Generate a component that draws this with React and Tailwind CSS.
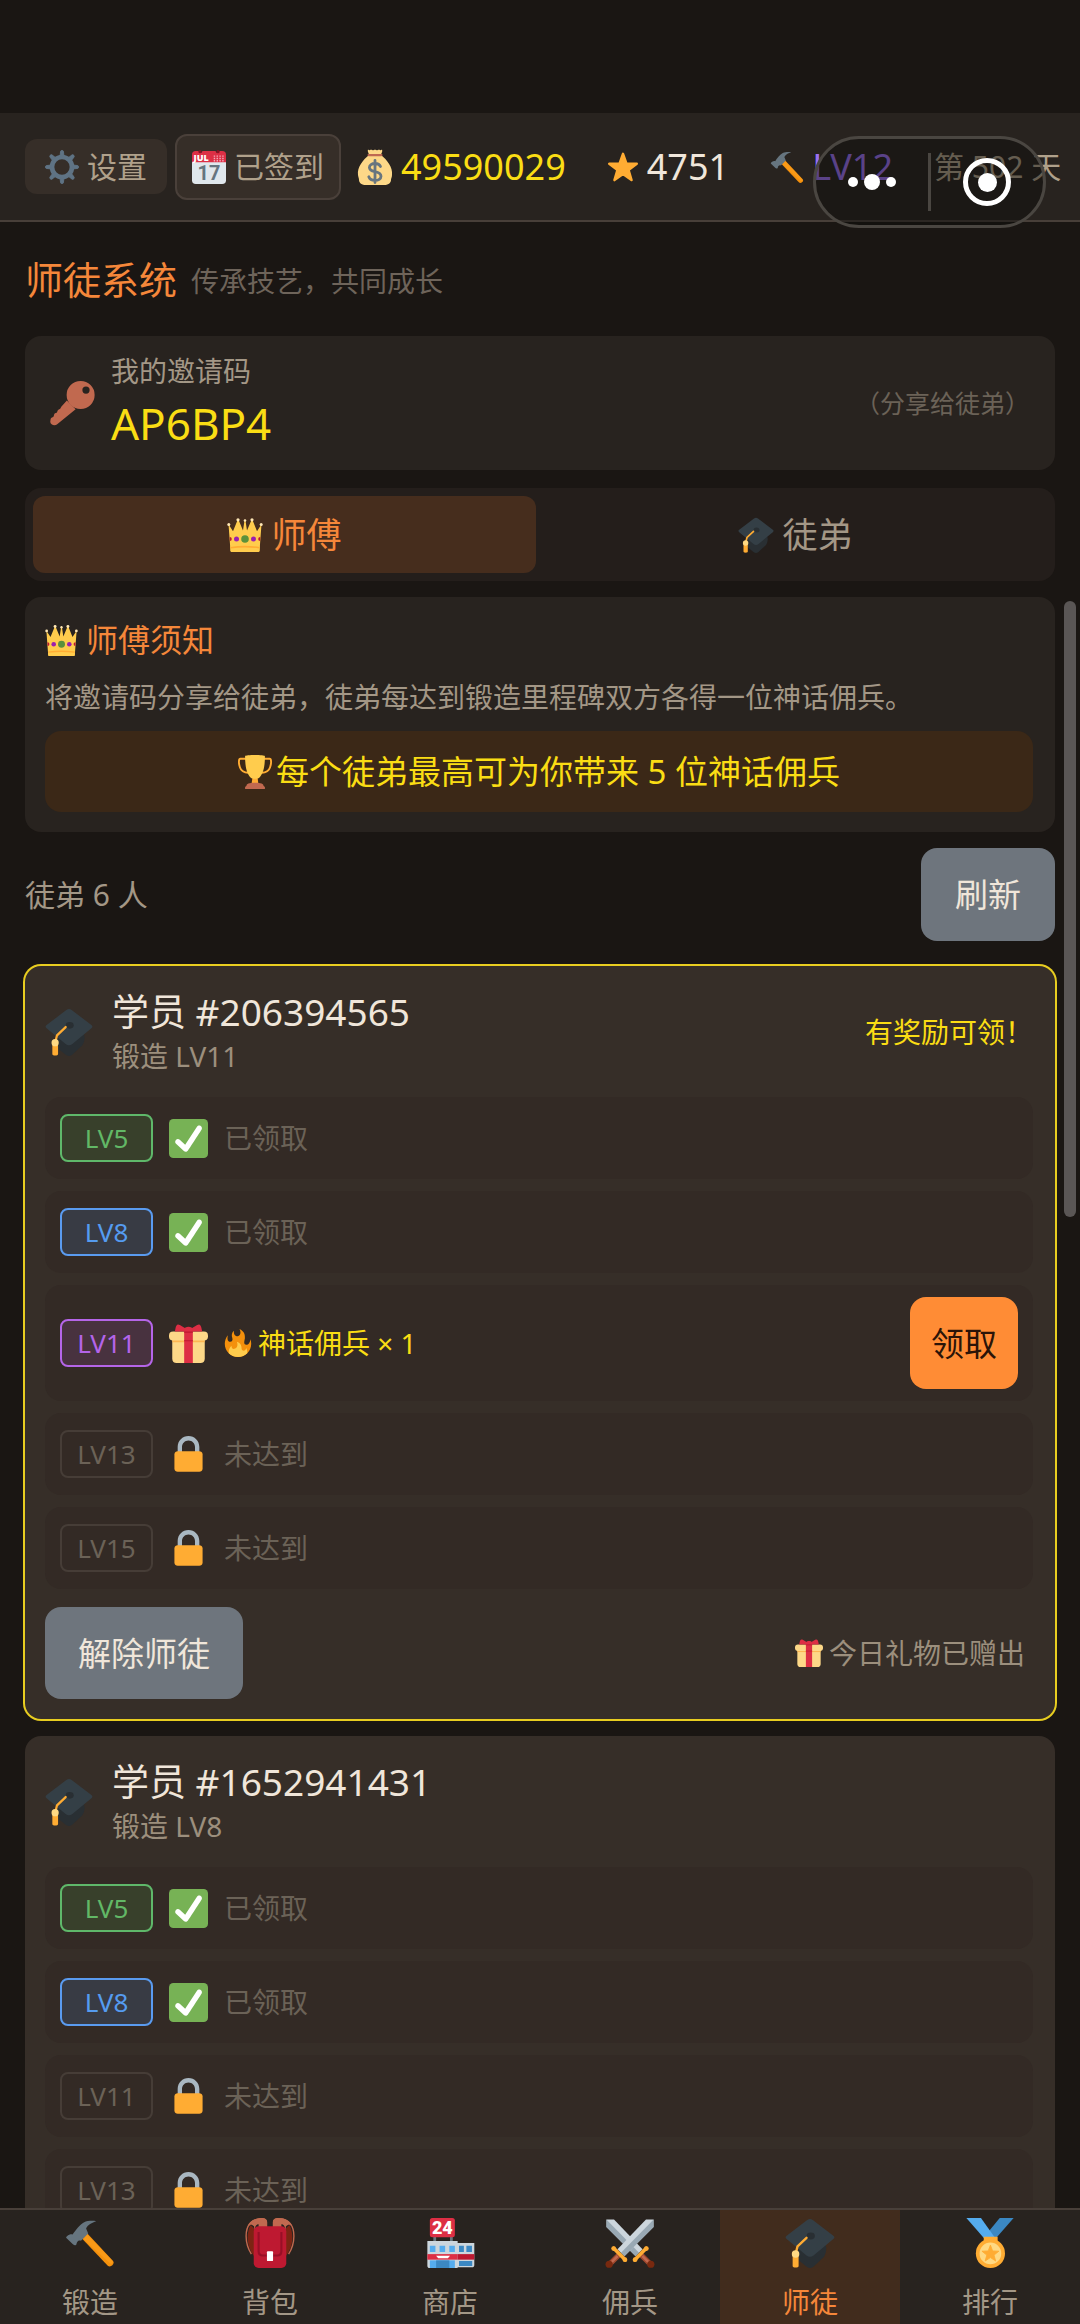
import React from "react";

function Icon({ className, children }) {
  return (
    <svg viewBox="0 0 36 36" aria-hidden="true" className={"shrink-0 " + className}>
      {children}
    </svg>
  );
}

const TEETH = [0, 45, 90, 135, 180, 225, 270, 315];

function Gear({ className }) {
  return (
    <Icon className={className}>
      <circle cx="18" cy="18" r="10.6" fill="none" stroke="#5f7384" strokeWidth="5" />
      {TEETH.map((a) => (
        <path
          key={a}
          d="M16 6.500L16.400 2.100A1.600 1.600 0 0 1 19.600 2.100L20 6.500Z"
          fill="#5f7384"
          stroke="#5f7384"
          strokeWidth="1"
          strokeLinejoin="round"
          transform={`rotate(${a} 18 18)`}
        />
      ))}
    </Icon>
  );
}

function Calendar({ className }) {
  return (
    <Icon className={className}>
      <path d="M36 32a4 4 0 0 1-4 4H4a4 4 0 0 1-4-4V9h36z" fill="#e0e7ec" />
      <path d="M4 1h3a2 2 0 0 0 4 0h14a2 2 0 0 0 4 0h3a4 4 0 0 1 4 4v8H0V5a4 4 0 0 1 4-4z" fill="#dd2f45" />
      <circle cx="8.500" cy="1.800" r="1.700" fill="#8c1022" />
      <circle cx="27.500" cy="1.800" r="1.700" fill="#8c1022" />
      <path d="M23 6.500h11M23 9h11M23 11.400h11" stroke="#f4abba" strokeWidth="1.400" strokeDasharray="1.500 1.500" />
      <text x="1.600" y="11.800" fontFamily="Open Sans, sans-serif" fontSize="9.500" fontWeight="800" fill="#fff">JUL</text>
      <text x="18" y="32" textAnchor="middle" fontFamily="Roboto, sans-serif" fontSize="21" fontWeight="700" fill="#66757f">17</text>
    </Icon>
  );
}

function Money({ className }) {
  return (
    <Icon className={className}>
      <path d="M12 6C6 11 0 18 1 26c.3 2 1 3.500 1 5 0 3 3 5 7 5h18c4 0 7-2 7-5 0-1.500 1-3 1-5 1-8-5-15-11-20z" fill="#fdd888" />
      <path d="M11 .600c1 .800 2 .800 3 0 1 .800 3 .800 4 0 1 .800 3 .800 4 0 1 .800 2 .800 3 0 1 2-1 4-1 5.400H12C12 4.500 10 2.500 11 .600z" fill="#fdd888" />
      <rect x="10.500" y="5" width="15" height="2.200" rx="1.100" fill="#bf6952" />
      <path d="M23.500 17.500c-.8-2-2.800-3-5.500-3-3.200 0-5.600 1.500-5.600 4 0 2.700 2.600 3.500 5.600 4.200 3.200.7 6 1.600 6 4.500 0 2.600-2.600 4.200-6 4.200-3.200 0-5.400-1.300-6.200-3.600M18 11.500v22" fill="none" stroke="#67757f" strokeWidth="2.800" strokeLinecap="round" />
    </Icon>
  );
}

function Star({ className }) {
  return (
    <Icon className={className}>
      <path d="M18 3.200l3.900 11 11.600.1-9.300 7 3.400 11.400L18 25.900l-9.600 6.800 3.400-11.400-9.300-7 11.600-.1z" fill="#ffac33" stroke="#ffac33" strokeWidth="2.800" strokeLinejoin="round" />
    </Icon>
  );
}

function Hammer({ className }) {
  return (
    <Icon className={className}>
      <path d="M11.700 14.300l3.900-3.600 19 20.300c1.500 1.900-1.700 5.100-3.800 3.400z" fill="#f4900c" />
      <path d="M13.500 15.500l2.200-4 18.500 19.300c.8 1.200-.6 2.900-1.700 2z" fill="#ffa322" opacity=".5" />
      <path d="M.800 14.200c.3-1.500 3-3 4.700-2.400C7.600 8.800 10.500 4.800 13.500 3.200c3-1.500 7-1.300 9-.9-3 .9-6.300 2.600-7.300 5.200l1.500 3.700-5.200 5.200c-2-.7-3 .8-3.300 2.600-.8 1-2 .7-2.700-.2z" fill="#66757f" />
    </Icon>
  );
}

function Key({ className }) {
  return (
    <Icon className={className}>
      <path d="M13.500 15.500l7 7-15 12.200c-1.500 1.300-5.300.5-5.300-2.200l.3-2.200c.2-1.500 2-1 2.500-2.200.3-1.600.4-2.400 1.800-2.600 1.500-.2.600-2 2.200-2.800 1.500-.6 1.300-.9 2-2.200z" fill="#c1694f" />
      <path fillRule="evenodd" d="M24.500 0a11.200 11.200 0 1 1 0 22.400 11.200 11.200 0 0 1 0-22.400zM28.800 4.300a2.900 2.900 0 1 0 0 5.800 2.900 2.900 0 0 0 0-5.800z" fill="#c1694f" />
    </Icon>
  );
}

function Crown({ className }) {
  return (
    <Icon className={className}>
      <path d="M7 20L11.500 6l5.400 14zM19 20l5.500-14L29 20z" fill="#f4900c" />
      <path d="M1.500 7.300l4.500 7L10.600 3h1L16 13.500 17.600 3h.8L20 13.500 24.500 3h1L30 14.300l4.500-7L32.500 34h-29z" fill="#ffcc4d" />
      <path d="M3.500 28.500c9-1.300 20-1.300 29 0V34c0 .800-.5 1-1.200 1H4.700C4 35 3.500 34.800 3.500 34z" fill="#ffcc4d" />
      <path d="M3.500 30.700c9-1.300 20-1.300 29 0" fill="none" stroke="#ffac33" strokeWidth="1.600" />
      <g fill="#ffe8b6">
        <circle cx="1.800" cy="7.500" r="1.500" />
        <circle cx="11" cy="2.800" r="1.600" />
        <circle cx="18" cy="3.500" r="1.300" />
        <circle cx="25" cy="2.800" r="1.600" />
        <circle cx="34.200" cy="7.500" r="1.500" />
      </g>
      <circle cx="18" cy="22" r="3.800" fill="#5c913b" />
      <circle cx="9.500" cy="22" r="2.500" fill="#9c1fae" />
      <circle cx="26.500" cy="22" r="2.500" fill="#9c1fae" />
      <path d="M2.700 20a2 2 0 0 1 .2 4zM33.300 20a2 2 0 0 0-.2 4z" fill="#be1931" />
    </Icon>
  );
}

function GradCap({ className }) {
  return (
    <Icon className={className}>
      <path d="M8 22l20-4c2.500 2 2 6.500 0 10l-7.800 7.200c-1.500 1-2.900 1-4.400 0L8 29z" fill="#292f33" />
      <path d="M16 1.500c1.400-1 2.600-1 4 0l14.800 11.300c1 .8 1 1.600 0 2.400L20.500 27c-1.600 1.300-3.400 1.300-5 0L1.200 15.200c-1-.8-1-1.600 0-2.400z" fill="#343f46" />
      <ellipse cx="18.500" cy="13" rx="3" ry="2.500" fill="#292f33" />
      <path d="M15.500 14.300L9 20.500 7.600 26" fill="none" stroke="#ffac33" strokeWidth="1.700" strokeLinecap="round" />
      <path d="M5.500 27h4.300v7.500c0 1.600-4.300 1.600-4.300 0z" fill="#ffac33" />
      <circle cx="7.600" cy="26" r="2.700" fill="#ffd983" />
    </Icon>
  );
}

function Trophy({ className }) {
  return (
    <Icon className={className}>
      <path d="M9 4H2.500C.5 4 .600 9 2 13c1.200 3.800 3.500 5.800 9 5.800M27 4h6.500c2 0 1.900 5 .5 9-1.200 3.800-3.500 5.800-9 5.800" fill="none" stroke="#ffac33" strokeWidth="2" />
      <path d="M15.500 22h5l1 8h-7z" fill="#ffac33" />
      <path d="M7.500 1.200C7.500-.400 28.500-.400 28.500 1.200c0 8-.8 17.800-6 22.800-1.600 1.600-7.400 1.600-9 0-5.200-5-6-14.800-6-22.800z" fill="#ffcc4d" />
      <path d="M9 32.500c0-2 2.500-3.200 9-3.200s9 1.200 9 3.200L28.500 34v2h-21v-2z" fill="#c1694f" />
    </Icon>
  );
}

function Check({ className }) {
  return (
    <Icon className={className}>
      <rect width="36" height="36" rx="4" fill="#77b255" />
      <path d="M29.280 6.362c-1.156-.751-2.704-.422-3.458.736L14.936 23.877l-5.029-4.650c-1.014-.938-2.596-.875-3.533.138-.937 1.014-.875 2.596.139 3.533l7.209 6.666c.48.445 1.090.665 1.696.665.673 0 1.534-.282 2.099-1.139.332-.506 12.500-19.270 12.500-19.270.751-1.159.421-2.707-.737-3.458z" fill="#fff" />
    </Icon>
  );
}

function Gift({ className }) {
  return (
    <Icon className={className}>
      <path d="M3 12h30v20c0 2.500-1.500 4-4 4H7c-2.500 0-4-1.500-4-4z" fill="#fdd888" />
      <path d="M3 14.500h30v2.300H3z" fill="#fcab40" opacity=".75" />
      <rect x="0" y="7" width="36" height="8.300" rx="3.800" fill="#fdd888" />
      <path d="M17 5L10 1C7.500-.500 6.500 1.500 6 4l-.6 3H17zM19 5l7-4c2.500-1.500 3.500.5 4 3l.6 3H19z" fill="#dd2e44" />
      <path d="M14 5c0-3.300 8-3.300 8 0v31h-8z" fill="#dd2e44" />
      <path d="M14 7.500h8M14 15.500h8" stroke="#be1931" strokeWidth="1" />
    </Icon>
  );
}

function Lock({ className }) {
  return (
    <Icon className={className}>
      <path d="M18 1C12.477 1 8 5.477 8 11v10h4V11c0-3.313 2.686-6 6-6s6 2.687 6 6v10h4V11c0-5.523-4.477-10-10-10z" fill="#aab8c2" />
      <path d="M31 31c0 2-1.500 3-3 3H8c-1.500 0-3-1-3-3V18c0-2 1.500-3 3-3h20c1.500 0 3 1 3 3z" fill="#ffac33" />
    </Icon>
  );
}

function Fire({ className }) {
  return (
    <Icon className={className}>
      <path d="M35 19c0-2.062-.367-4.039-1.040-5.868-.46 5.389-3.333 8.157-6.335 6.868-2.812-1.208-.917-5.917-.777-8.164.236-3.809-.012-8.169-6.931-11.794 2.875 5.500.333 8.917-2.333 9.125-2.958.231-5.667-2.542-4.667-7.042-3.238 2.386-3.332 6.402-2.333 9 1.042 2.708-.042 4.958-2.583 5.208-2.840.28-4.418-3.041-2.963-8.333C2.520 10.965 1 14.805 1 19c0 9.389 7.611 17 17 17s17-7.611 17-17z" fill="#f4900c" />
      <path d="M28.394 23.999c.148 3.084-2.561 4.293-4.019 3.709-2.106-.843-1.541-2.291-2.083-5.291s-2.625-5.083-5.708-6c2.250 6.333-1.247 8.667-3.080 9.084-1.872.426-3.753-.001-3.968-4.007C7.352 23.668 6 26.676 6 30c0 .368.023.73.055 1.090C9.125 34.124 13.342 36 18 36s8.875-1.876 11.945-4.910c.032-.36.055-.722.055-1.090 0-2.187-.584-4.236-1.606-6.001z" fill="#ffcc4d" />
    </Icon>
  );
}

function Backpack({ className }) {
  return (
    <Icon className={className}>
      <path d="M4 5C0 13 2 22 7 28V8zM32 5c4 8 2 17-3 23V8z" fill="#7c2413" />
      <path d="M15.500 7V3C15.500 1.500 14 .500 12 .500 4 .500.800 6 .800 13c0 5 1.500 9.500 3.800 13M20.500 7V3c0-1.500 1.500-2.500 3.500-2.500 8 0 11.200 5.500 11.200 12.500 0 5-1.500 9.500-3.800 13" fill="none" stroke="#c1694f" strokeWidth="1" />
      <path d="M7 10C7 6 8 4.500 9.800 4.500V7h6V3.200C15.800 1 14 0 12 0 7 0 3 2.500 2 6c2-1.500 3-1.500 4.500 0zM29 10c0-4-1-5.500-2.800-5.500V7h-6V3.200C20.200 1 22 0 24 0c5 0 9 2.500 10 6-2-1.500-3-1.500-4.500 0z" fill="#c1694f" />
      <rect x="6.300" y="6" width="23.400" height="30" rx="3.500" fill="#be1931" />
      <path d="M9.800 10v14c0 2 1 3 3 3h10.400c2 0 3-1 3-3V10" fill="none" stroke="#980f26" strokeWidth="1.500" />
      <rect x="15.800" y="24" width="4.400" height="7" rx=".600" fill="#fff" />
    </Icon>
  );
}

function Shop({ className }) {
  return (
    <Icon className={className}>
      <path d="M6 13h2v4H6zM18 13h2v4h-2z" fill="#66757f" />
      <rect x="3.500" y="0" width="18" height="13.800" rx="1.800" fill="#dd2e44" />
      <text x="12.500" y="11.400" textAnchor="middle" fontFamily="Roboto, sans-serif" fontSize="13" fontWeight="900" fill="#fff">24</text>
      <path d="M23 18h12.500v16c0 .800-.7 1.500-1.500 1.500H23z" fill="#ccd6dd" />
      <path d="M1.700 16.500h21.800V36H3.200c-.8 0-1.500-.700-1.500-1.500z" fill="#ccd6dd" />
      <path d="M3.500 20h4v4.500h-4zM10.500 20h4v4.500h-4zM17.500 20h4v4.500h-4z" fill="#55acee" />
      <path d="M24.500 20h3.500v4.500h-3.500zM29.800 20h4v4.500h-4zM24.500 31h9.500v3.500h-9.500z" fill="#3b88c3" />
      <path d="M3.500 30.500h18V36h-18z" fill="#55acee" />
      <path d="M8 30.500h9.500V36H8z" fill="#3b88c3" />
      <path d="M1.700 26h21.800v4H1.700z" fill="#dd2e44" />
      <path d="M23.500 26h12v4h-12z" fill="#be1931" />
      <path d="M8 27.200h10l-1.500 1.800h-7z" fill="#fff" />
    </Icon>
  );
}

function Blade() {
  return (
    <>
      <path d="M35 1v5.500L14 27.500 9 22.500 29.500 1z" fill="#ccd6dd" />
      <path d="M35 1v5.500L14 27.500l-2.500-2.500z" fill="#8899a6" opacity=".75" />
      <path d="M8.500 26l2 2-6.500 6.500-2-2z" fill="#c1694f" stroke="#a0482e" strokeWidth="1" />
      <circle cx="3" cy="33.300" r="2.600" fill="#78290f" />
      <path d="M6.300 21.800l8.400 8.500" stroke="#ffac33" strokeWidth="2.600" strokeLinecap="round" />
      <circle cx="6.200" cy="22" r="1.700" fill="#ffac33" />
      <circle cx="14.300" cy="30" r="1.700" fill="#ffac33" />
    </>
  );
}

function Swords({ className }) {
  return (
    <Icon className={className}>
      <g transform="translate(36 0) scale(-1 1)">
        <Blade />
      </g>
      <Blade />
    </Icon>
  );
}

function Medal({ className }) {
  return (
    <Icon className={className}>
      <path d="M25 0L16 11l4.500 5.500L35 0z" fill="#3b88c3" />
      <path d="M1 0h10.500l11 15.500h-8z" fill="#55acee" />
      <path d="M13.500 13.500h10v5h-10z" fill="#ffac33" />
      <circle cx="18.300" cy="25.500" r="10.500" fill="#ffac33" />
      <circle cx="18.300" cy="25.500" r="7.800" fill="#ffd983" />
      <path d="M18.300 19.500l1.600 4.200 4.500.2-3.500 2.800 1.200 4.300-3.800-2.500-3.800 2.500 1.200-4.300-3.500-2.800 4.500-.2z" fill="#ffac33" stroke="#ffac33" strokeWidth=".6" strokeLinejoin="round" />
    </Icon>
  );
}

function Header() {
  return (
    <header className="flex h-[109px] shrink-0 items-center overflow-hidden border-b-2 border-[#483f39] bg-[#28231f] pl-[25px] whitespace-nowrap text-[#b0a18b]">
      <button type="button" className="flex h-[55px] items-center gap-2 rounded-xl bg-[#362e28] px-5 text-[30px]">
        <Gear className="size-[34px]" />
        设置
      </button>
      <button type="button" className="ml-2 flex h-[66px] items-center gap-2 rounded-xl border-2 border-[#4a403a] bg-[#362e28] px-[15px] text-[30px]">
        <Calendar className="size-[34px]" />
        已签到
      </button>
      <div className="ml-4 flex items-center gap-[41px] text-[36px]">
        <span className="flex items-center gap-2 text-[#fadd14]">
          <Money className="size-[36px]" />
          49590029
        </span>
        <span className="flex items-center gap-2 text-[#f0e6da]">
          <Star className="size-[32px]" />
          4751
        </span>
        <span className="flex items-center gap-2 text-[#9b70f0]">
          <Hammer className="size-[34px]" />
          LV12
        </span>
        <span className="text-[30px]">第 502 天</span>
      </div>
    </header>
  );
}

function Capsule() {
  return (
    <div className="absolute top-[136px] right-[34px] flex h-[92px] w-[233px] items-center rounded-full border-[3px] border-[#4a4641] bg-[#0c0a08]/45">
      <button type="button" aria-label="更多" className="flex h-full flex-1 items-center justify-center gap-[6px]">
        <span className="size-[10px] rounded-full bg-white" />
        <span className="size-4 rounded-full bg-white" />
        <span className="size-[10px] rounded-full bg-white" />
      </button>
      <span className="h-[58px] w-[3px] bg-[#4a4641]" />
      <button type="button" aria-label="关闭" className="flex h-full flex-1 items-center justify-center">
        <span className="flex size-12 items-center justify-center rounded-full border-[5px] border-white">
          <span className="size-[19px] rounded-full bg-white" />
        </span>
      </button>
    </div>
  );
}

const BADGES = {
  green: "border-[#5fb86a] bg-[#38402b] text-[#62b866]",
  blue: "border-[#5a9bf0] bg-[#383b44] text-[#559bf0]",
  purple: "border-[#b565e8] bg-[#48323f] text-[#b464ea]",
  locked: "border-[#463d37] text-[#6b6257]",
};

function Milestone({ level, tone, state }) {
  return (
    <li className="flex min-h-[82px] items-center gap-4 rounded-2xl bg-[#332a25] px-[15px] py-3 text-[28px]">
      <span className={"flex h-12 w-[93px] items-center justify-center rounded-lg border-2 text-[26px] " + BADGES[tone]}>
        {level}
      </span>
      {state === "done" && (
        <>
          <Check className="size-[39px]" />
          <span className="text-[#6b6257]">已领取</span>
        </>
      )}
      {state === "locked" && (
        <>
          <Lock className="size-[39px]" />
          <span className="text-[#6b6257]">未达到</span>
        </>
      )}
      {state === "ready" && (
        <>
          <Gift className="size-[39px]" />
          <span className="flex items-center gap-[6px] text-[#fadd14]">
            <Fire className="size-7" />
            神话佣兵 × 1
          </span>
          <button type="button" className="ml-auto h-[92px] rounded-2xl bg-[#ff8c35] px-[21px] text-[33px] text-[#2b1408]">
            领取
          </button>
        </>
      )}
    </li>
  );
}

function Student({ name, level, milestones, reward }) {
  return (
    <article className={"shrink-0 rounded-2xl bg-[#362e28] p-5 pr-[22px] " + (reward ? "ring-2 ring-[#e8cd20]" : "")}>
      <div className="flex h-[92px] items-center">
        <GradCap className="size-12" />
        <div className="ml-[19px]">
          <h2 className="text-[37px] leading-[48px] text-[#f0e6da]">{name}</h2>
          <p className="text-[28px] leading-10 text-[#9c8f7d]">{level}</p>
        </div>
        {reward && <span className="ml-auto text-[28px] text-[#fadd14]">有奖励可领！</span>}
      </div>
      <ul className="mt-[19px] flex flex-col gap-3">
        {milestones.map((m) => (
          <Milestone key={m.level} {...m} />
        ))}
      </ul>
      {reward && (
        <div className="mt-[18px] flex items-center justify-between">
          <button type="button" className="h-[92px] rounded-2xl bg-[#6e757d] px-[33px] text-[33px] text-[#f0e6da]">
            解除师徒
          </button>
          <span className="mr-2 flex items-center gap-[6px] text-[28px] text-[#9c8f7d]">
            <Gift className="size-7" />
            今日礼物已赠出
          </span>
        </div>
      )}
    </article>
  );
}

const STUDENTS = [
  {
    name: "学员 #206394565",
    level: "锻造 LV11",
    reward: true,
    milestones: [
      { level: "LV5", tone: "green", state: "done" },
      { level: "LV8", tone: "blue", state: "done" },
      { level: "LV11", tone: "purple", state: "ready" },
      { level: "LV13", tone: "locked", state: "locked" },
      { level: "LV15", tone: "locked", state: "locked" },
    ],
  },
  {
    name: "学员 #1652941431",
    level: "锻造 LV8",
    reward: false,
    milestones: [
      { level: "LV5", tone: "green", state: "done" },
      { level: "LV8", tone: "blue", state: "done" },
      { level: "LV11", tone: "locked", state: "locked" },
      { level: "LV13", tone: "locked", state: "locked" },
    ],
  },
];

const NAV = [
  { label: "锻造", Glyph: Hammer },
  { label: "背包", Glyph: Backpack },
  { label: "商店", Glyph: Shop },
  { label: "佣兵", Glyph: Swords },
  { label: "师徒", Glyph: GradCap, active: true },
  { label: "排行", Glyph: Medal },
];

export default function App() {
  return (
    <div className="relative flex h-screen flex-col bg-[#1a1613] pt-[113px] font-['Noto_Sans','Noto_Sans_CJK_SC',sans-serif] leading-none text-[#a39786]">
      <Header />
      <Capsule />
      <main className="flex min-h-0 flex-1 flex-col overflow-y-auto px-[25px] pt-8 [scrollbar-width:none]">
        <div className="flex h-[50px] shrink-0 items-center gap-[14px]">
          <h1 className="text-[38px] text-[#f5873a]">师徒系统</h1>
          <p className="pt-1 text-[28px] text-[#6e645a]">传承技艺，共同成长</p>
        </div>

        <section className="mt-8 flex h-[134px] shrink-0 items-center rounded-2xl bg-[#28231f] px-[25px]">
          <Key className="size-[45px]" />
          <div className="ml-4">
            <p className="text-[28px] leading-10">我的邀请码</p>
            <p className="text-[44px] leading-[64px] text-[#fadd14]">AP6BP4</p>
          </div>
          <span className="ml-auto text-[25px] text-[#6b6257]">（分享给徒弟）</span>
        </section>

        <div role="tablist" className="mt-[18px] flex shrink-0 rounded-2xl bg-[#241e1b] p-2 text-[35px]">
          <button type="button" role="tab" aria-selected="true" className="flex h-[77px] flex-1 items-center justify-center gap-2 rounded-xl bg-[#462d1d] text-[#f5873a]">
            <Crown className="size-[36px]" />
            师傅
          </button>
          <button type="button" role="tab" aria-selected="false" className="ml-2 flex h-[77px] flex-1 items-center justify-center gap-2">
            <GradCap className="size-[36px]" />
            徒弟
          </button>
        </div>

        <section className="mt-4 shrink-0 rounded-2xl bg-[#28231f] p-5 pr-[22px]">
          <h2 className="flex h-[46px] items-center gap-2 text-[32px] text-[#f5873a]">
            <Crown className="size-[33px]" />
            师傅须知
          </h2>
          <p className="mt-3 text-[28px] leading-[44px]">将邀请码分享给徒弟，徒弟每达到锻造里程碑双方各得一位神话佣兵。</p>
          <p className="mt-3 flex h-[81px] items-center justify-center gap-1 rounded-2xl bg-[#3b2817] text-[33px] text-[#fadd14]">
            <Trophy className="size-[34px]" />
            每个徒弟最高可为你带来 5 位神话佣兵
          </p>
        </section>

        <div className="mt-4 flex shrink-0 items-center justify-between text-[30px]">
          徒弟 6 人
          <button type="button" className="h-[93px] rounded-2xl bg-[#6e757d] px-[34px] text-[33px] text-[#f0e6da]">
            刷新
          </button>
        </div>

        <div className="mt-[25px] flex flex-col gap-[17px]">
          {STUDENTS.map((s) => (
            <Student key={s.name} {...s} />
          ))}
        </div>
      </main>

      <div className="absolute top-[601px] right-1 h-[616px] w-3 rounded-full bg-[#5a5655]" />

      <nav className="relative flex h-[116px] shrink-0 border-t-2 border-[#483f39] bg-[#28231f]">
        {NAV.map(({ label, Glyph, active }) => (
          <button
            type="button"
            key={label}
            className={"flex flex-1 flex-col items-center gap-5 pt-2 text-[28px] " + (active ? "bg-[#412c1d] text-[#f5873a]" : "")}
          >
            <Glyph className="size-[50px]" />
            {label}
          </button>
        ))}
      </nav>
    </div>
  );
}
